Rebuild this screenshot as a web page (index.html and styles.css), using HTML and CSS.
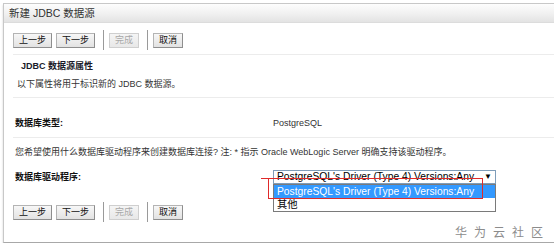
FILE: index.html
```html
<!DOCTYPE html>
<html lang="zh-CN">
<head>
    <meta charset="UTF-8">
    <title>新建 JDBC 数据源</title>
    <link rel="stylesheet" href="styles.css">
</head>
<body>
    <!-- Painel principal -->
    <div class="panel">
        <div class="titlebar">新建 JDBC 数据源</div>

        <div class="toolbar">
            <button class="btn">上一步</button>
            <button class="btn">下一步</button>
            <span class="sep"></span>
            <button class="btn" disabled>完成</button>
            <span class="sep"></span>
            <button class="btn">取消</button>
        </div>

        <div class="section intro">
            <h2>JDBC 数据源属性</h2>
            <p class="desc">以下属性将用于标识新的 JDBC 数据源。</p>
        </div>

        <div class="section type">
            <div class="row">
                <span class="label">数据库类型:</span>
                <span class="value">PostgreSQL</span>
            </div>
        </div>

        <div class="section driver">
            <p class="question">您希望使用什么数据库驱动程序来创建数据库连接? 注: * 指示 Oracle WebLogic Server 明确支持该驱动程序。</p>
            <div class="row">
                <span class="label">数据库驱动程序:</span>
                <div class="select">
                    <span class="current">PostgreSQL's Driver (Type 4) Versions:Any</span>
                    <span class="arrow">&#9660;</span>
                    <!-- lista aberta -->
                    <ul class="options">
                        <li class="selected">PostgreSQL's Driver (Type 4) Versions:Any</li>
                        <li>其他</li>
                    </ul>
                    <!-- marcação vermelha -->
                    <div class="mark"></div>
                </div>
            </div>
        </div>

        <div class="toolbar bottom">
            <button class="btn">上一步</button>
            <button class="btn">下一步</button>
            <span class="sep"></span>
            <button class="btn" disabled>完成</button>
            <span class="sep"></span>
            <button class="btn">取消</button>
        </div>

        <div class="watermark">华为云社区</div>
    </div>
</body>
</html>
```

FILE: styles.css
```css
/* Estilos gerais */
body {
    margin: 0;
    padding: 0;
    background-color: #fff;
    font-family: Tahoma, "Liberation Sans", "Noto Sans CJK SC", sans-serif;
    font-size: 9px;
    color: #222;
    overflow: hidden;
}

/* Painel */
.panel {
    position: relative;
    margin: 3px -20px 0 3px;
    border: 1px solid #c8c8c8;
    border-right: none;
    border-bottom-color: #a8a8a8;
    box-shadow: 0 2px 2px rgba(0, 0, 0, 0.18);
    padding-bottom: 20px;
    background-color: #fff;
}

.titlebar {
    height: 18px;
    line-height: 18px;
    padding-left: 5px;
    font-size: 10.5px;
    color: #333;
    background: linear-gradient(#fdfdfd, #f0f0f0 55%, #e3e3e3);
    border-bottom: 1px solid #dcdcdc;
}

/* Barra de botões */
.toolbar {
    display: flex;
    align-items: center;
    padding: 7px 0 4px 9px;
}

.toolbar.bottom {
    padding-top: 18px;
    padding-bottom: 0;
}

.btn {
    height: 15px;
    padding: 0 5px;
    margin: 0 4px 0 0;
    font-family: inherit;
    font-size: 9px;
    line-height: 13px;
    color: #111;
    background: linear-gradient(#f7f7f7, #e2e2e2);
    border: 1px solid #b4b4b4;
    border-right-color: #8e8e8e;
    border-bottom-color: #8e8e8e;
    border-radius: 0;
}

.btn:disabled {
    color: #a8a8a8;
    border-color: #cfcfcf;
    background: linear-gradient(#f5f5f5, #e8e8e8);
}

.sep {
    width: 1px;
    height: 20px;
    background-color: #9a9a9a;
    margin: 0 5px 0 4px;
}

/* Seções */
.section {
    margin-left: 9px;
    border-top: 1px solid #ececec;
}

.intro {
    padding: 4px 0 6px 0;
}

.intro h2 {
    margin: 0;
    padding-left: 8px;
    font-size: 9px;
    line-height: 14px;
    font-weight: bold;
    color: #1a1a2a;
}

.desc {
    margin: 4px 0 0 0;
    padding-left: 4px;
    line-height: 14px;
    color: #333;
}

.type {
    padding: 18px 0 7px 2px;
}

.driver {
    padding: 7px 0 0 2px;
}

.question {
    margin: 0;
    line-height: 14px;
    color: #333;
}

.row {
    display: flex;
    align-items: center;
    line-height: 14px;
}

.driver .row {
    margin-top: 11px;
}

.label {
    width: 258px;
    font-weight: bold;
    color: #111;
}

.value {
    color: #333;
}

/* Campo de seleção */
.select {
    position: relative;
    box-sizing: border-box;
    width: 223px;
    height: 14px;
    border: 1px solid #7f9db9;
    display: flex;
    align-items: center;
    justify-content: space-between;
    padding: 0 3px 0 3px;
    font-family: "Liberation Sans", Arial, sans-serif;
    font-size: 10.3px;
    color: #000;
}

.arrow {
    font-size: 8px;
}

.options {
    position: absolute;
    top: 13px;
    left: -1px;
    box-sizing: border-box;
    width: 223px;
    margin: 0;
    padding: 0;
    list-style: none;
    border: 1px solid #7a7a7a;
    background-color: #fff;
}

.options li {
    height: 13px;
    line-height: 13px;
    padding-left: 3px;
    font-family: "Liberation Sans", "Noto Sans CJK SC", sans-serif;
}

.options li.selected {
    background-color: #3399ff;
    color: #fff;
}

.mark {
    position: absolute;
    left: -6px;
    top: 7px;
    width: 214px;
    height: 19px;
    border: 1px solid #e02a2a;
    border-left: none;
}

.mark::before {
    content: "";
    position: absolute;
    left: 0;
    top: 0;
    width: 1px;
    height: 19px;
    background-color: #e02a2a;
}

.mark::after {
    content: "";
    position: absolute;
    left: -7px;
    top: -1px;
    width: 7px;
    height: 1px;
    background-color: #e02a2a;
}

/* Marca d'água */
.watermark {
    position: absolute;
    left: 451px;
    top: 219px;
    font-family: "Noto Sans CJK SC", sans-serif;
    font-size: 12px;
    letter-spacing: 7px;
    color: #8c8c8c;
}
```
